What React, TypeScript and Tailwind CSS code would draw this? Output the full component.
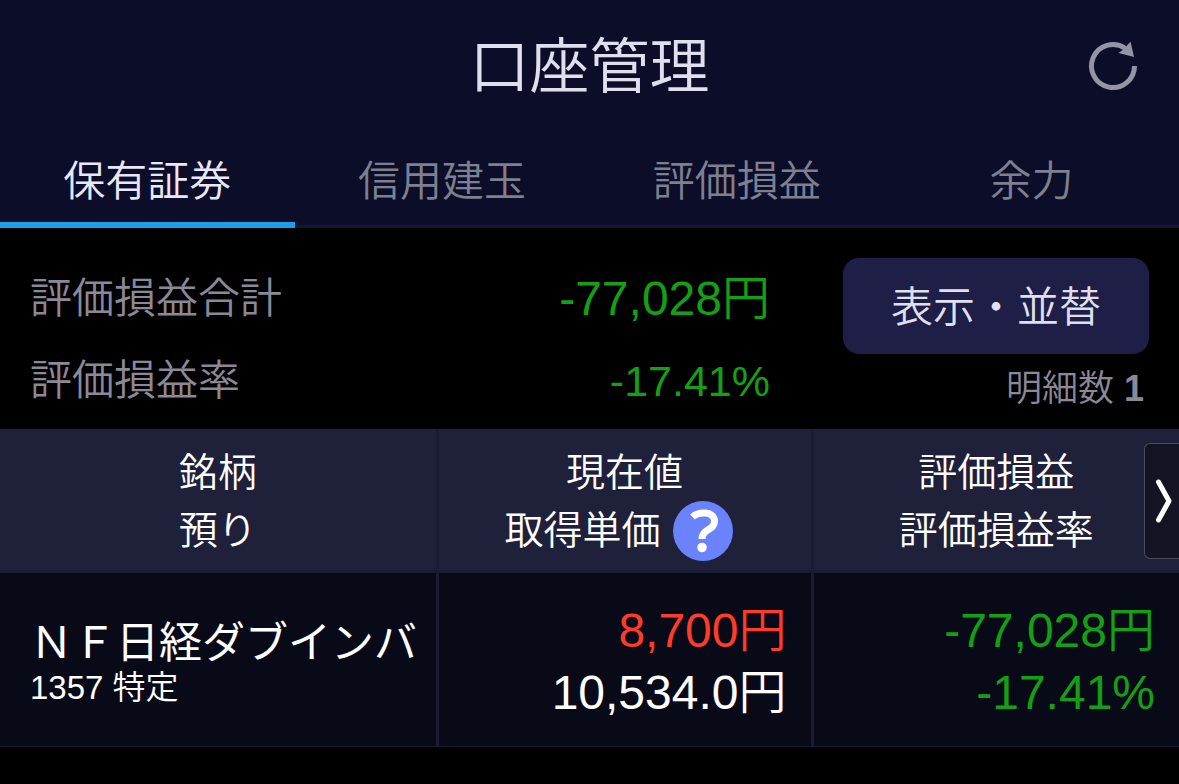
import * as React from "react";

type Tab = "holdings" | "margin" | "profit" | "power";

const tabs: { id: Tab; label: string }[] = [
  { id: "holdings", label: "保有証券" },
  { id: "margin", label: "信用建玉" },
  { id: "profit", label: "評価損益" },
  { id: "power", label: "余力" },
];

const holdings = [
  {
    code: "1357",
    name: "ＮＦ日経ダブインバ",
    account: "特定",
    price: "8,700円",
    cost: "10,534.0円",
    profit: "-77,028円",
    rate: "-17.41%",
  },
];

const ReloadIcon = () => (
  <svg className="size-[60px]" viewBox="0 0 60 60" fill="none">
    <path
      d="M51.500 30A21.500 21.500 0 1 1 42 12.200"
      stroke="#9494a6"
      strokeWidth="5"
    />
    <path d="M47.500 5.500L51 21L35.500 17L41 13Z" fill="#9494a6" />
  </svg>
);

const HelpIcon = () => (
  <svg className="size-[60px]" viewBox="0 0 60 60" fill="none">
    <circle cx="30" cy="30" r="30" fill="#6a82fb" />
    <path
      d="M19.500 16C25.500 10.500 41.500 9.500 41.500 20.500C41.500 29.500 29 27.500 29 38"
      stroke="#fff"
      strokeWidth="7"
    />
    <circle cx="29" cy="46.500" r="4.800" fill="#fff" />
  </svg>
);

const Header = () => (
  <header className="relative flex h-[132px] items-center justify-center">
    <h1 className="pt-1 text-[60px] leading-none text-[#dfdff0]">口座管理</h1>
    <button aria-label="更新" className="absolute right-9 top-9">
      <ReloadIcon />
    </button>
  </header>
);

const Summary = () => (
  <section className="flex px-[30px] pb-[5px] pt-[30px]">
    <dl className="grow pr-[73px] text-[42px] leading-[82px]">
      <div className="flex justify-between">
        <dt className="text-[#8b8998]">評価損益合計</dt>
        <dd className="text-[48px] text-[#14a014]">-77,028円</dd>
      </div>
      <div className="flex justify-between">
        <dt className="text-[#8b8998]">評価損益率</dt>
        <dd className="text-[43px] text-[#14a014]">-17.41%</dd>
      </div>
    </dl>
    <div className="w-[306px] shrink-0">
      <button className="h-24 w-full rounded-2xl bg-[#1e1e46] pt-0.5 text-[42px] text-[#dfdff0]">
        表示・並替
      </button>
      <p className="pr-[5px] text-right text-[36px] leading-[70px] text-[#8b8998]">
        明細数 <span className="font-bold">1</span>
      </p>
    </div>
  </section>
);

const HoldingsTable = () => (
  <table className="w-full table-fixed border-separate border-spacing-0">
    <colgroup>
      <col className="w-[37.2%]" />
      <col className="w-[31.8%]" />
      <col />
    </colgroup>
    <thead>
      <tr className="h-36 bg-[#1f213a] text-[39px] leading-[58px] text-white">
        <th className="border-b-3 border-r-3 border-[#1a1c34] p-0 pt-1 font-[350]">
          <div>銘柄</div>
          <div>預り</div>
        </th>
        <th className="border-b-3 border-r-3 border-[#1a1c34] p-0 pt-1 font-[350]">
          <div>現在値</div>
          <div className="flex items-center justify-center gap-3 pr-3">
            <span>取得単価</span>
            <button aria-label="ヘルプ" className="-my-1">
              <HelpIcon />
            </button>
          </div>
        </th>
        <th className="relative border-b-3 border-[#1a1c34] p-0 pt-1 font-[350]">
          <div>評価損益</div>
          <div>評価損益率</div>
          <button
            aria-label="次の項目"
            className="absolute right-0 top-[14px] flex h-[116px] w-[35px] items-center justify-center rounded-l-md border border-r-0 border-[#4a4a5c] bg-[#141425]"
          >
            <svg className="h-12 w-6" viewBox="0 0 24 48" fill="none">
              <path
                d="M8.500 5L19 24L8.500 43"
                stroke="#fff"
                strokeWidth="5"
                strokeLinecap="round"
                strokeLinejoin="round"
              />
            </svg>
          </button>
        </th>
      </tr>
    </thead>
    <tbody>
      {holdings.map((item) => (
        <tr
          key={item.code}
          className="h-[174px] bg-[#080a18] text-[48px] leading-[62px]"
        >
          <td className="border-b border-r-3 border-[#1a1c34] p-0 pl-[30px] pt-1 text-white">
            <div className="whitespace-nowrap font-['Noto_Sans_CJK_JP',sans-serif] text-[43px] font-normal leading-[52px]">
              {item.name}
            </div>
            <div className="text-[33px] leading-[46px]">
              {item.code} {item.account}
            </div>
          </td>
          <td className="border-b border-r-3 border-[#1a1c34] p-0 pr-6 pt-1 text-right">
            <div className="text-[#ff3b2a]">{item.price}</div>
            <div className="text-white">{item.cost}</div>
          </td>
          <td className="border-b border-[#1a1c34] p-0 pr-6 pt-1 text-right text-[#14a014]">
            <div>{item.profit}</div>
            <div>{item.rate}</div>
          </td>
        </tr>
      ))}
    </tbody>
  </table>
);

const App: React.FC = () => {
  const [currentTab, setCurrentTab] = React.useState<Tab>("holdings");

  return (
    <div className="min-h-screen bg-black font-['Liberation_Sans','Noto_Sans_CJK_JP',sans-serif] font-[350]">
      <div className="bg-[#0c0d28]">
        <Header />
        <nav className="grid h-24 grid-cols-4 border-b-3 border-[#15172e]">
          {tabs.map((tab) => (
            <button
              key={tab.id}
              onClick={() => setCurrentTab(tab.id)}
              className={
                tab.id === currentTab
                  ? "-mb-[3px] border-b-6 border-[#1c9fe8] pt-[9px] text-[42px] text-[#e8e8fa]"
                  : "pt-1.5 text-[42px] text-[#7f7f92]"
              }
            >
              {tab.label}
            </button>
          ))}
        </nav>
      </div>
      <main>
        <Summary />
        <HoldingsTable />
      </main>
    </div>
  );
};

export default App;
